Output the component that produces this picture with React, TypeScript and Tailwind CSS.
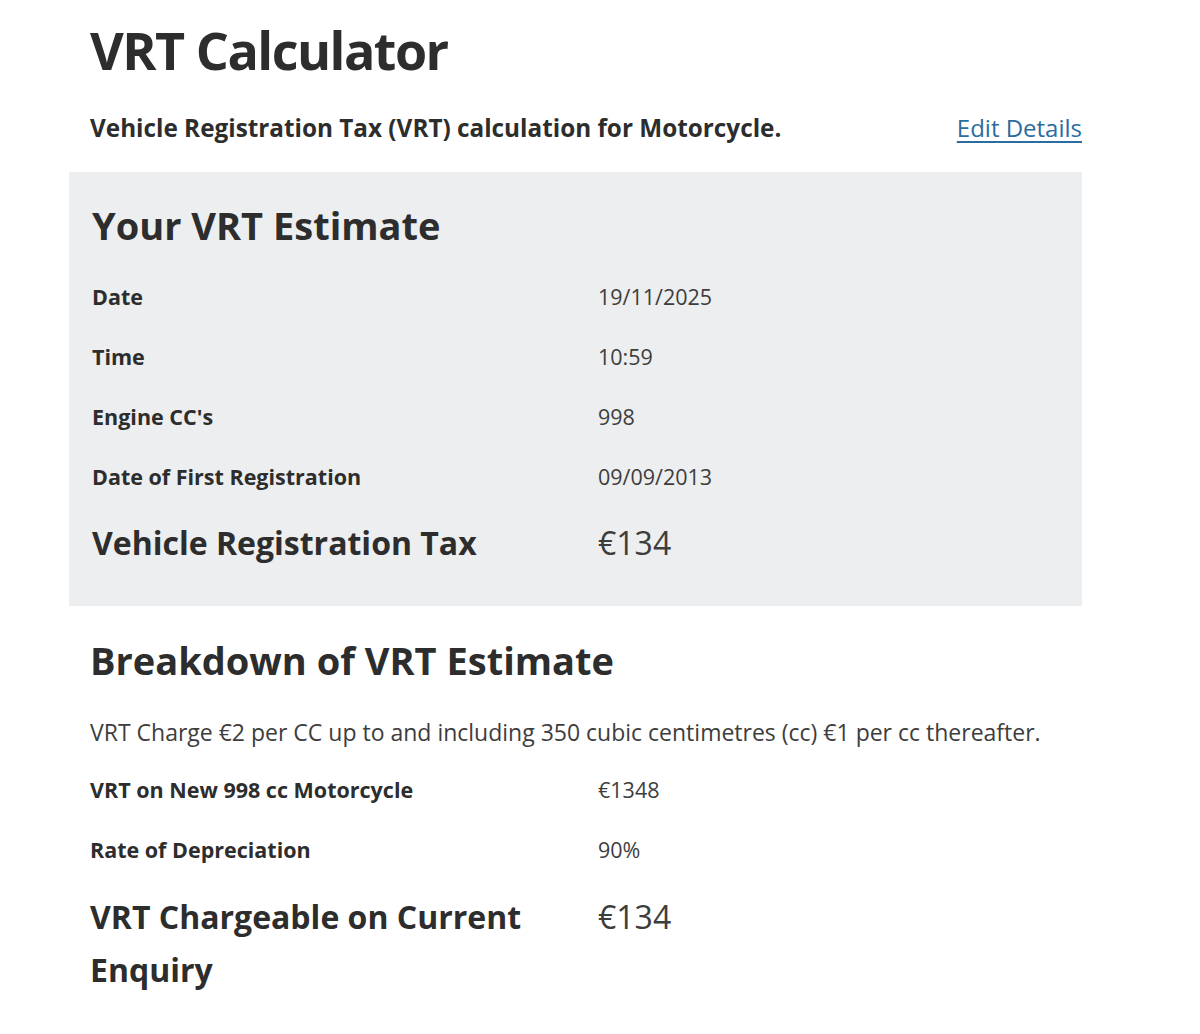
import React from 'react';

type Row = { label: string; value: string };

const estimateRows: Row[] = [
  { label: 'Date', value: '19/11/2025' },
  { label: 'Time', value: '10:59' },
  { label: "Engine CC's", value: '998' },
  { label: 'Date of First Registration', value: '09/09/2013' },
];

const breakdownRows: Row[] = [
  { label: 'VRT on New 998 cc Motorcycle', value: '€1348' },
  { label: 'Rate of Depreciation', value: '90%' },
];

const App = () => {
  return (
    <div className="min-h-screen bg-white text-[#2d2d2d] font-['Open_Sans',sans-serif]">
      <div className="ml-[69px] w-[1013px] pt-[18px]">
        <h1 className="pl-[21px] text-[52px] font-bold leading-[64px] tracking-[-1.5px]">VRT Calculator</h1>

        <div className="mt-[28px] flex items-center justify-between pl-[21px]">
          <p className="text-[24.3px] font-bold leading-[36px]">
            Vehicle Registration Tax (VRT) calculation for Motorcycle.
          </p>
          <a href="#" className="text-[24px] leading-[36px] text-[#2b6d9e] underline underline-offset-4">
            Edit Details
          </a>
        </div>

        <section className="mt-[26px] bg-[#eceeef] px-[23px] pt-[28px] pb-[27px]">
          <h2 className="text-[38px] font-bold leading-[50px]">Your VRT Estimate</h2>
          <div className="mt-[17px]">
            {estimateRows.map((row) => (
              <div key={row.label} className="flex h-[60px] items-center">
                <span className="w-[506px] text-[21.5px] font-bold">{row.label}</span>
                <span className="text-[21.5px] text-[#3d3d3d]">{row.value}</span>
              </div>
            ))}
            <div className="flex h-[72px] items-center">
              <span className="w-[506px] text-[32px] font-bold">Vehicle Registration Tax</span>
              <span className="text-[32px] text-[#3d3d3d]">€134</span>
            </div>
          </div>
        </section>

        <section className="pl-[21px]">
          <h2 className="mt-[29px] text-[38px] font-bold leading-[50px]">Breakdown of VRT Estimate</h2>
          <p className="mt-[29px] text-[23px] leading-[36px] text-[#3d3d3d]">
            VRT Charge €2 per CC up to and including 350 cubic centimetres (cc) €1 per cc thereafter.
          </p>
          <div className="mt-[10px]">
            {breakdownRows.map((row) => (
              <div key={row.label} className="flex h-[60px] items-center">
                <span className="w-[508px] text-[21.5px] font-bold">{row.label}</span>
                <span className="text-[21.5px] text-[#3d3d3d]">{row.value}</span>
              </div>
            ))}
            <div className="mt-[10px] flex items-start">
              <span className="w-[508px] pr-[40px] text-[32px] font-bold leading-[53px]">
                VRT Chargeable on Current Enquiry
              </span>
              <span className="text-[32px] leading-[53px] text-[#3d3d3d]">€134</span>
            </div>
          </div>
        </section>
      </div>
    </div>
  );
};

export default App;
